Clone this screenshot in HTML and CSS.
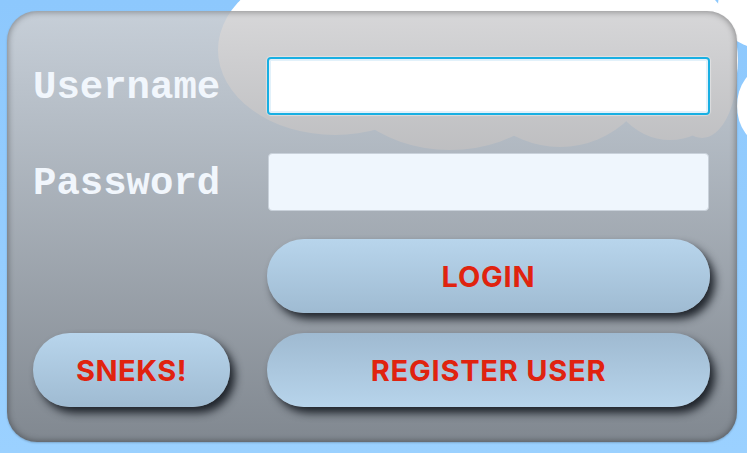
FILE: index.html
```html
<!DOCTYPE html>
<html>
<head>
<meta charset="utf-8">
<link rel="stylesheet" href="styles.css">
</head>
<body>
<svg class="cloud" width="747" height="453" viewBox="0 0 747 453" aria-hidden="true">
  <g fill="#ffffff">
    <ellipse cx="335" cy="50" rx="117" ry="85"/>
    <ellipse cx="450" cy="40" rx="130" ry="110"/>
    <ellipse cx="560" cy="45" rx="100" ry="102"/>
    <ellipse cx="670" cy="60" rx="68" ry="80"/>
    <ellipse cx="702" cy="70" rx="35" ry="68"/>
    <circle cx="760" cy="6" r="42"/>
    <ellipse cx="765" cy="106" rx="28" ry="38"/>
  </g>
</svg>
<div class="panel">
  <label class="label" for="user">Username</label>
  <input id="user" class="field focused" type="text">
  <label class="label" for="pass">Password</label>
  <input id="pass" class="field plain" type="password">
  <div></div>
  <button class="btn login">LOGIN</button>
  <button class="btn sneks">SNEKS!</button>
  <button class="btn register">REGISTER USER</button>
</div>
</body>
</html>
```

FILE: styles.css
```css
html, body {
  margin: 0;
  padding: 0;
}
body {
  width: 747px;
  height: 453px;
  overflow: hidden;
  background: linear-gradient(#8dc8fd, #9bd1ff);
  position: relative;
  font-family: "Inter", "Liberation Sans", sans-serif;
}
.cloud {
  position: absolute;
  left: 0;
  top: 0;
}
.panel {
  position: relative;
  box-sizing: border-box;
  width: 730px;
  height: 431px;
  margin: 11px 0 0 7px;
  padding: 46px 27px 35px 26px;
  border-radius: 30px;
  background: linear-gradient(rgba(208, 208, 210, 0.86), rgba(126, 128, 132, 0.9));
  box-shadow: inset 0 0 6px 1px rgba(0, 0, 0, 0.35), 0 1px 2px rgba(0, 0, 0, 0.2);
  display: grid;
  grid-template-columns: 197px 443px;
  grid-template-rows: 58px 96px 102px 94px;
  column-gap: 37px;
  align-items: end;
}
.label {
  font-family: "Nimbus Mono PS", "Courier New", "FreeMono", "Liberation Mono", monospace;
  font-weight: bold;
  font-size: 39px;
  color: #f1f6fc;
  height: 58px;
  display: flex;
  align-items: center;
  line-height: 1;
  padding-top: 4px;
  box-sizing: border-box;
}
.field {
  box-sizing: border-box;
  height: 58px;
  width: 100%;
  border-radius: 4px;
  outline: none;
  margin: 0;
  font-size: 20px;
}
.focused {
  border: 2px solid #18afe2;
  background: #ffffff;
  box-shadow: inset 0 0 0 2px #e2f1fa, 0 0 1px 1px rgba(255, 255, 255, 0.4);
}
.plain {
  border: 1px solid #c9d1da;
  background: #eff6fd;
  width: 441px;
  margin-left: 1px;
}
.btn {
  box-sizing: border-box;
  height: 74px;
  border: none;
  border-radius: 37px;
  font-family: "Inter", "Liberation Sans", sans-serif;
  font-weight: 700;
  font-size: 29px;
  color: #e0230f;
  letter-spacing: 0.8px;
  box-shadow: 5px 6px 8px rgba(12, 16, 24, 0.85);
  padding: 0;
  cursor: pointer;
}
.sneks {
  letter-spacing: 0.5px;
}
.login, .sneks {
  background: linear-gradient(#b8d5ec, #9fbbd2);
}
.register {
  background: linear-gradient(#9fbad1, #b7d4eb);
}
```
